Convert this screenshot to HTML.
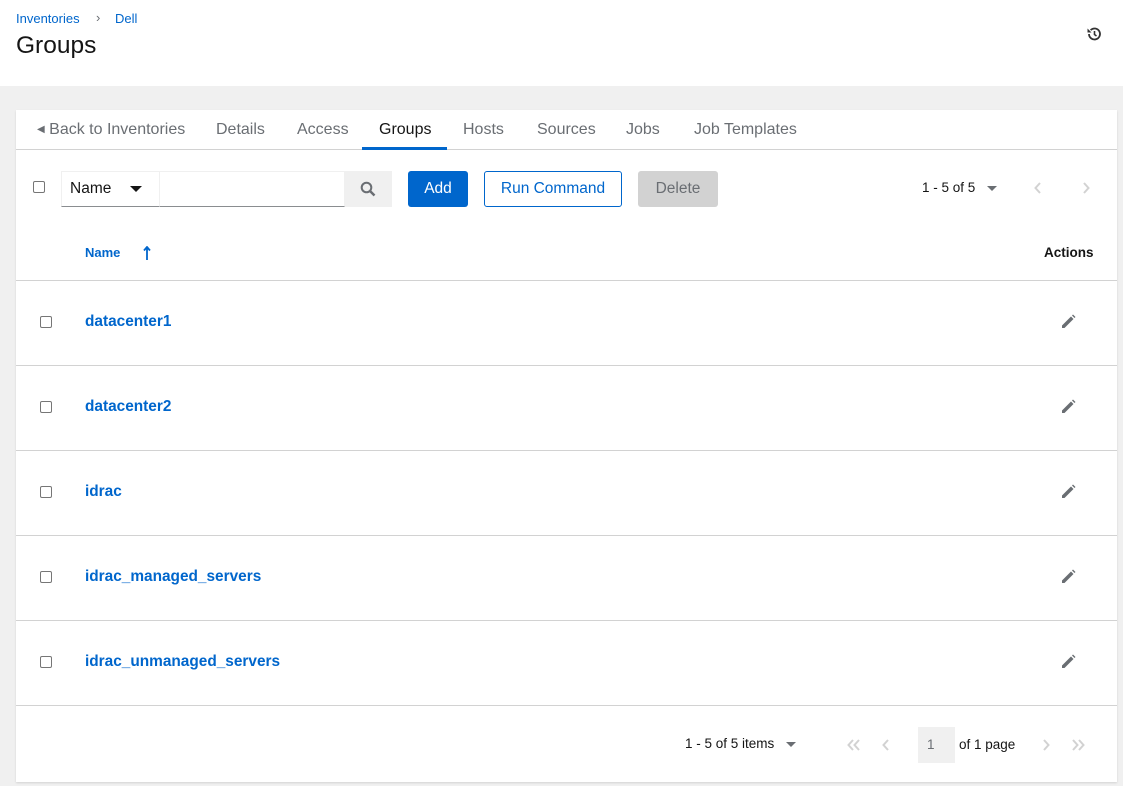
<!DOCTYPE html>
<html><head><style>
*{box-sizing:border-box;margin:0;padding:0}
body{width:1123px;height:786px;overflow:hidden;background:#f0f0f0;font-family:"Liberation Sans",sans-serif;color:#151515;position:relative}
.top{position:absolute;left:0;top:0;width:1123px;height:86px;background:#fff}
.abs{position:absolute;white-space:nowrap}
.card{position:absolute;left:16px;top:110px;width:1101px;height:672px;background:#fff;box-shadow:0 1px 2px rgba(0,0,0,.12)}
.tab{position:absolute;top:11px;font-size:16px;color:#6a6e73;white-space:nowrap}
.cb{position:absolute;width:12px;height:12px;border:1px solid #767676;border-radius:2px;background:#fff}
.link{position:absolute;font-size:15.4px;font-weight:bold;color:#0066cc}
.row{position:absolute;left:0;width:1101px;height:1px;background:#d2d2d2}
.pen{position:absolute;left:1044px}
.chev{position:absolute}
</style></head><body>
<div class="top">
 <div class="abs" style="left:16px;top:11px;font-size:13px;color:#0066cc">Inventories</div>
 <div class="abs" style="left:96px;top:10px;font-size:13px;color:#6a6e73">&#8250;</div>
 <div class="abs" style="left:115px;top:11px;font-size:13px;color:#0066cc">Dell</div>
 <div class="abs" style="left:16px;top:32px;font-size:24.5px;">Groups</div>
 <svg class="abs" style="left:1086px;top:26px" width="16" height="16" viewBox="0 0 16 16"><path d="M3 8a5.5 5.5 0 1 0 1.6-3.9" fill="none" stroke="#333" stroke-width="1.8"/><path d="M1.5 2.5v4h4z" fill="#333"/><path d="M8.5 5v3.5l2 1.5" fill="none" stroke="#333" stroke-width="1.6"/></svg>
</div>
<div class="card">
 <div class="tab" style="left:21px"><span style="font-size:10px;vertical-align:2px">&#9664;</span> Back to Inventories</div>
 <div class="tab" style="left:200px">Details</div>
 <div class="tab" style="left:281px">Access</div>
 <div class="tab" style="left:363px;color:#151515">Groups</div>
 <div class="tab" style="left:447px">Hosts</div>
 <div class="tab" style="left:521px">Sources</div>
 <div class="tab" style="left:610px">Jobs</div>
 <div class="tab" style="left:678px">Job Templates</div>
 <div class="row" style="top:39px"></div>
 <div style="position:absolute;left:346px;top:37px;width:85px;height:3px;background:#0066cc"></div>
 <div class="cb" style="left:17px;top:71px"></div>
 <div style="position:absolute;left:45px;top:61px;width:99px;height:36px;border:1px solid #f0f0f0;border-bottom-color:#8a8d90"><span style="position:absolute;left:8px;top:8px;font-size:15.5px">Name</span><svg style="position:absolute;left:68px;top:14px" width="12" height="7" viewBox="0 0 12 7"><path d="M0 0h12L6 6z" fill="#151515"/></svg></div>
 <div style="position:absolute;left:143px;top:61px;width:186px;height:36px;border:1px solid #f0f0f0;border-bottom-color:#8a8d90"></div>
 <div style="position:absolute;left:329px;top:61px;width:47px;height:36px;background:#f0f0f0"><svg style="position:absolute;left:15px;top:10px" width="16" height="16" viewBox="0 0 16 16"><circle cx="6.5" cy="6.5" r="4.8" fill="none" stroke="#6a6e73" stroke-width="2"/><path d="M10 10l4.5 4.5" stroke="#6a6e73" stroke-width="2.5"/></svg></div>
 <div style="position:absolute;left:392px;top:61px;width:60px;height:36px;background:#0066cc;border-radius:3px;color:#fff;font-size:15.5px;text-align:center;line-height:36px">Add</div>
 <div style="position:absolute;left:468px;top:61px;width:138px;height:36px;border:1px solid #0066cc;border-radius:3px;color:#0066cc;font-size:15.5px;text-align:center;line-height:34px">Run Command</div>
 <div style="position:absolute;left:622px;top:61px;width:80px;height:36px;background:#d2d2d2;border-radius:3px;color:#6a6e73;font-size:15.5px;text-align:center;line-height:36px">Delete</div>
 <div class="abs" style="left:906px;top:70px;font-size:13.5px">1 - 5 of 5</div>
 <svg class="chev" style="left:971px;top:76px" width="10" height="6" viewBox="0 0 10 6"><path d="M0 0h10L5 5z" fill="#6a6e73"/></svg>
 <svg class="chev" style="left:1018px;top:72px" width="8" height="12" viewBox="0 0 8 12"><path d="M6 1L1.5 6 6 11" fill="none" stroke="#d2d2d2" stroke-width="2"/></svg>
 <svg class="chev" style="left:1066px;top:72px" width="8" height="12" viewBox="0 0 8 12"><path d="M2 1l4.5 5L2 11" fill="none" stroke="#d2d2d2" stroke-width="2"/></svg>
 <div class="abs" style="left:69px;top:135px;font-size:13px;font-weight:bold;color:#0066cc">Name</div>
 <svg class="chev" style="left:127px;top:136px" width="8" height="14" viewBox="0 0 8 14"><path d="M4 1v13M1 4.5L4 1l3 3.5" fill="none" stroke="#0066cc" stroke-width="1.8"/></svg>
 <div class="abs" style="left:1028px;top:135px;font-size:13.5px;font-weight:bold">Actions</div>
 <div class="row" style="top:170px"></div>
 <div class="cb" style="left:24px;top:206px"></div><div class="link" style="left:69px;top:203px">datacenter1</div>
 <div class="row" style="top:255px"></div>
 <div class="cb" style="left:24px;top:291px"></div><div class="link" style="left:69px;top:288px">datacenter2</div>
 <div class="row" style="top:340px"></div>
 <div class="cb" style="left:24px;top:376px"></div><div class="link" style="left:69px;top:373px">idrac</div>
 <div class="row" style="top:425px"></div>
 <div class="cb" style="left:24px;top:461px"></div><div class="link" style="left:69px;top:458px">idrac_managed_servers</div>
 <div class="row" style="top:510px"></div>
 <div class="cb" style="left:24px;top:546px"></div><div class="link" style="left:69px;top:543px">idrac_unmanaged_servers</div>
 <div class="row" style="top:595px"></div>
 <svg class="pen" style="top:204px" width="16" height="16" viewBox="0 0 16 16"><path d="M2 11.5L11 2.5l2.5 2.5L4.5 14H2z" fill="#6a6e73"/><path d="M12 1.5l1-1 2.5 2.5-1 1z" fill="#6a6e73"/></svg>
 <svg class="pen" style="top:289px" width="16" height="16" viewBox="0 0 16 16"><path d="M2 11.5L11 2.5l2.5 2.5L4.5 14H2z" fill="#6a6e73"/><path d="M12 1.5l1-1 2.5 2.5-1 1z" fill="#6a6e73"/></svg>
 <svg class="pen" style="top:374px" width="16" height="16" viewBox="0 0 16 16"><path d="M2 11.5L11 2.5l2.5 2.5L4.5 14H2z" fill="#6a6e73"/><path d="M12 1.5l1-1 2.5 2.5-1 1z" fill="#6a6e73"/></svg>
 <svg class="pen" style="top:459px" width="16" height="16" viewBox="0 0 16 16"><path d="M2 11.5L11 2.5l2.5 2.5L4.5 14H2z" fill="#6a6e73"/><path d="M12 1.5l1-1 2.5 2.5-1 1z" fill="#6a6e73"/></svg>
 <svg class="pen" style="top:544px" width="16" height="16" viewBox="0 0 16 16"><path d="M2 11.5L11 2.5l2.5 2.5L4.5 14H2z" fill="#6a6e73"/><path d="M12 1.5l1-1 2.5 2.5-1 1z" fill="#6a6e73"/></svg>
 <div class="abs" style="left:669px;top:626px;font-size:13.5px">1 - 5 of 5 items</div>
 <svg class="chev" style="left:770px;top:632px" width="10" height="6" viewBox="0 0 10 6"><path d="M0 0h10L5 5z" fill="#6a6e73"/></svg>
 <svg class="chev" style="left:831px;top:629px" width="14" height="12" viewBox="0 0 14 12"><path d="M6 1L1.5 6 6 11M12 1L7.5 6 12 11" fill="none" stroke="#d2d2d2" stroke-width="2"/></svg>
 <svg class="chev" style="left:866px;top:629px" width="8" height="12" viewBox="0 0 8 12"><path d="M6 1L1.5 6 6 11" fill="none" stroke="#d2d2d2" stroke-width="2"/></svg>
 <div style="position:absolute;left:902px;top:617px;width:37px;height:36px;background:#f0f0f0;font-size:13.5px;color:#6a6e73;padding:10px 0 0 9px">1</div>
 <div class="abs" style="left:943px;top:627px;font-size:13.5px">of 1 page</div>
 <svg class="chev" style="left:1026px;top:629px" width="8" height="12" viewBox="0 0 8 12"><path d="M2 1l4.5 5L2 11" fill="none" stroke="#d2d2d2" stroke-width="2"/></svg>
 <svg class="chev" style="left:1055px;top:629px" width="14" height="12" viewBox="0 0 14 12"><path d="M2 1l4.5 5L2 11M8 1l4.5 5L8 11" fill="none" stroke="#d2d2d2" stroke-width="2"/></svg>
</div>
</body></html>
